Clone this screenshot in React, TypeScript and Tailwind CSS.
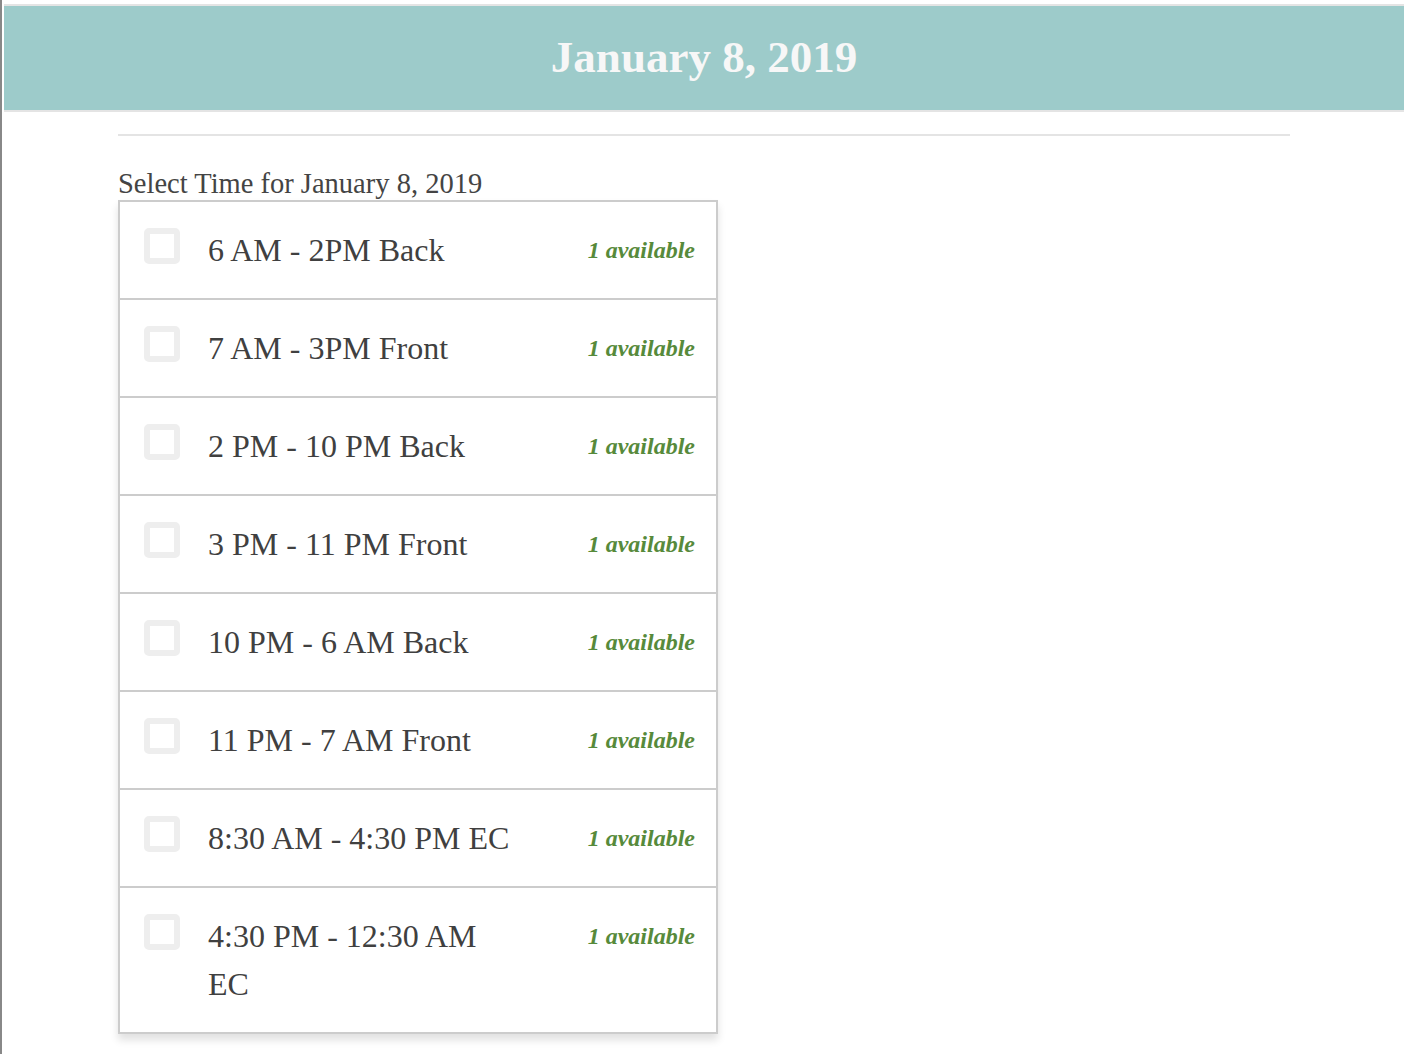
const SLOTS = [
  "6 AM - 2PM Back",
  "7 AM - 3PM Front",
  "2 PM - 10 PM Back",
  "3 PM - 11 PM Front",
  "10 PM - 6 AM Back",
  "11 PM - 7 AM Front",
  "8:30 AM - 4:30 PM EC",
  "4:30 PM - 12:30 AM EC",
];

function SlotRow({ label, last }: { label: string; last: boolean }) {
  return (
    <li
      className={[
        "flex items-start py-[24px] pl-[24px] pr-[21px]",
        last ? "" : "border-b-2 border-[#cccccc]",
      ].join(" ")}
    >
      <span className="mt-[2px] h-[36px] w-[36px] shrink-0 rounded-[5px] border-[6px] border-[#eeeeee] bg-white" />
      <span className="ml-[28px] w-[310px] text-[32px] leading-[48px] text-[#404040]">
        {label}
      </span>
      <span className="ml-auto text-[24px] font-bold italic leading-[48px] text-[#578a3b]">
        1 available
      </span>
    </li>
  );
}

export default function App() {
  return (
    <div className="min-h-screen border-l-2 border-[#888888] bg-white px-[2px] pt-[4px] font-['Liberation_Serif',serif]">
      <header className="flex h-[108px] items-center justify-center border-y-2 border-[#e4e4e4] bg-[#9dcbca]">
        <h1 className="text-[45px] font-bold text-[#f7f7f7]">January 8, 2019</h1>
      </header>

      <main className="ml-[114px] w-[1172px] pb-10">
        <hr className="mt-[22px] border-t-2 border-[#e4e4e4]" />
        <p className="mt-[32px] text-[28.5px] leading-[32px] text-[#444444]">
          Select Time for January 8, 2019
        </p>
        <ul className="w-[600px] border-2 border-[#cccccc] shadow-[0_6px_8px_rgba(0,0,0,0.12)]">
          {SLOTS.map((s, i) => (
            <SlotRow key={s} label={s} last={i === SLOTS.length - 1} />
          ))}
        </ul>
      </main>
    </div>
  );
}
